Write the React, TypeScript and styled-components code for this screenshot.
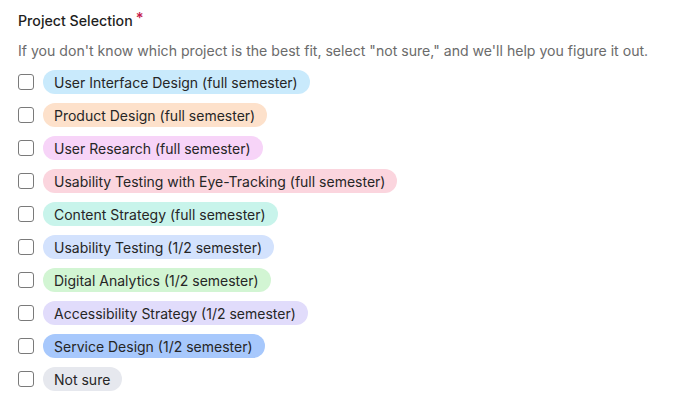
import styled, { createGlobalStyle } from "styled-components";

const GlobalStyle = createGlobalStyle`
	body {
		margin: 0;
		background: #ffffff;
		font-family: Inter, "Liberation Sans", sans-serif;
		-webkit-font-smoothing: antialiased;
	}
`;

const Field = styled.div`
	padding: 11px 18px 0;
	display: flex;
	flex-direction: column;
`;

const Label = styled.div`
	font-size: 14.2px;
	font-weight: 500;
	color: #1f1f1f;
	line-height: 20px;
`;

const Required = styled.span`
	color: #c4184a;
	margin-left: 3px;
	font-size: 15px;
	position: relative;
	top: -3px;
`;

const Hint = styled.div`
	margin-top: 10px;
	font-size: 14.1px;
	color: #6b6b6b;
	line-height: 20px;
`;

const Options = styled.div`
	margin-top: 9px;
	display: flex;
	flex-direction: column;
	gap: 9px;
`;

const Row = styled.label`
	display: flex;
	align-items: center;
	gap: 9px;
	height: 24px;
`;

const Box = styled.span`
	box-sizing: border-box;
	width: 16px;
	height: 16px;
	border: 1.5px solid #7a7a7a;
	border-radius: 3px;
	background: #fff;
	flex-shrink: 0;
`;

const Pill = styled.span<{ $bg: string }>`
	display: inline-flex;
	align-items: center;
	height: 24px;
	padding: 0 12px 0 11px;
	border-radius: 12px;
	background: ${(p) => p.$bg};
	font-size: 14px;
	color: #262626;
`;

const options = [
	{ label: "User Interface Design (full semester)", bg: "#c9eafc" },
	{ label: "Product Design (full semester)", bg: "#fde1cb" },
	{ label: "User Research (full semester)", bg: "#f7d4f8" },
	{ label: "Usability Testing with Eye-Tracking (full semester)", bg: "#fbd5de" },
	{ label: "Content Strategy (full semester)", bg: "#c8f4eb" },
	{ label: "Usability Testing (1/2 semester)", bg: "#d3e2fd" },
	{ label: "Digital Analytics (1/2 semester)", bg: "#d2f5d3" },
	{ label: "Accessibility Strategy (1/2 semester)", bg: "#e1dcfb" },
	{ label: "Service Design (1/2 semester)", bg: "#a7c8fc" },
	{ label: "Not sure", bg: "#e6e8ee" },
];

const App = () => {
	return (
		<>
			<GlobalStyle />
			<Field>
				<Label>
					Project Selection<Required>*</Required>
				</Label>
				<Hint>
					If you don't know which project is the best fit, select "not sure," and we'll help you
					figure it out.
				</Hint>
				<Options>
					{options.map((o) => (
						<Row key={o.label}>
							<Box />
							<Pill $bg={o.bg}>{o.label}</Pill>
						</Row>
					))}
				</Options>
			</Field>
		</>
	);
};

export default App;
